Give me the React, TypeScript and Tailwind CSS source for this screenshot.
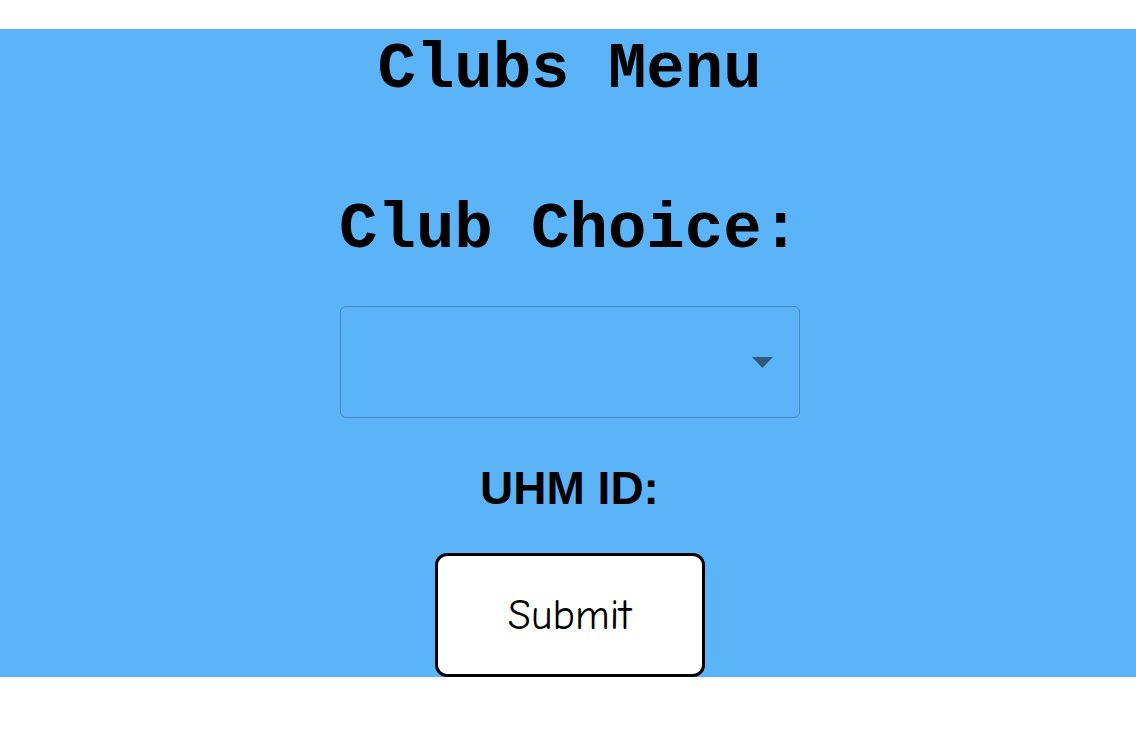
import React from "react";

export default function App() {
  return (
    <div className="w-full h-[738px] bg-white pt-[29px]">
      <div className="w-full h-[648px] bg-[#5cb4f8] flex flex-col items-center pl-[3px]">
        <h1 className="mt-[9px] text-[64px] leading-none font-bold text-black font-['Liberation_Mono','Courier_New',monospace]">
          Clubs Menu
        </h1>
        <h2 className="mt-[96px] text-[64px] leading-none font-bold text-black font-['Liberation_Mono','Courier_New',monospace]">
          Club Choice:
        </h2>
        <div className="mt-[44px] w-[460px] h-[112px] rounded-[6px] border border-[#4789bf] flex items-center justify-end pr-[26px]">
          <svg width="21" height="11" viewBox="0 0 21 11">
            <path d="M0 0 L21 0 L10.5 11 Z" fill="#2f5a7c" />
          </svg>
        </div>
        <div className="mt-[47px] text-[46px] leading-none font-bold text-black font-['Liberation_Sans',Arial,sans-serif]">
          UHM ID:
        </div>
        <button className="mt-[42px] w-[270px] h-[124px] bg-white border-[3px] border-black rounded-[12px] flex items-center justify-center text-[42px] text-black font-['Comic_Sans_MS','Comic_Neue',cursive]">
          Submit
        </button>
      </div>
    </div>
  );
}
